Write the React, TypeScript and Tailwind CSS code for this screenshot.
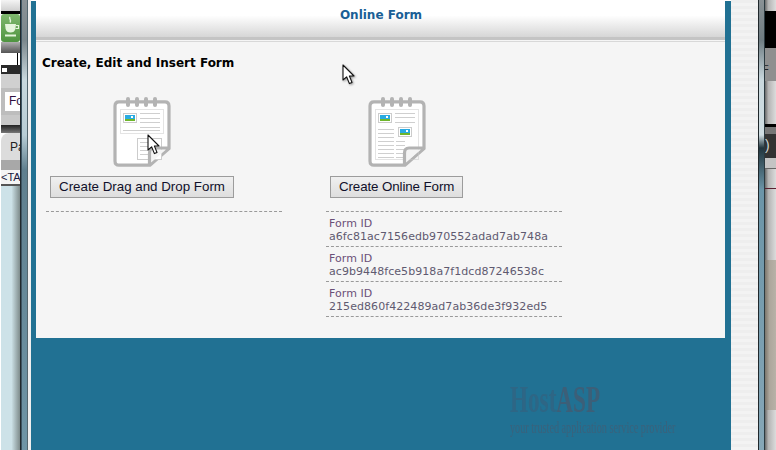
const sans = { fontFamily: '"DejaVu Sans", sans-serif' };

function Picture({ x, y, w = 14, h = 10 }: { x: number; y: number; w?: number; h?: number }) {
  return (
    <g>
      <rect x={x + 0.5} y={y + 0.5} width={w - 1} height={h - 1} fill="#fff" stroke="#cccccc" />
      <rect x={x + 2} y={y + 2} width={w - 4} height={h - 4} fill="#29abe2" />
      <rect x={x + 2} y={y + h - 4} width={w - 4} height="2" fill="#6fb62c" />
      <rect x={x + w - 6} y={y + 3} width="2" height="2" fill="#fff" />
    </g>
  );
}

function Notebook({ online }: { online?: boolean }) {
  const line = '#cfcfcf';
  return (
    <svg width="58" height="70" viewBox="0 0 58 70" className="block">
      <path d="M6 4.8 H52 Q56 4.8 56 9 V51.5 L37 68.2 H6 Q2 68.2 2 64 V9 Q2 4.8 6 4.8 Z" fill="#fff" stroke="#b3b3b3" strokeWidth="3.2" />
      {[15, 24, 33, 42].map((x) => (
        <rect key={x} x={x - 2} y="0" width="4" height="10" rx="2" fill="#b3b3b3" />
      ))}
      {online ? (
        <g>
          <rect x="7.5" y="12.5" width="43" height="50" fill="none" stroke="#c8c8c8" strokeDasharray="1 1" />
          <Picture x={10} y={16} />
          <Picture x={30} y={30} />
          {[16, 20, 25].map((y) => (
            <line key={y} x1="27" x2="47" y1={y + 0.5} y2={y + 0.5} stroke={line} />
          ))}
          {[32, 36, 40, 44, 48, 52, 56, 60].map((y) => (
            <line key={y} x1="10" x2="26" y1={y + 0.5} y2={y + 0.5} stroke={line} />
          ))}
          {[44, 48, 52, 56, 60].map((y) => (
            <line key={y} x1="28" x2="37" y1={y + 0.5} y2={y + 0.5} stroke={line} />
          ))}
        </g>
      ) : (
        <g>
          <rect x="7.5" y="12.5" width="43" height="24" fill="none" stroke="#c8c8c8" strokeDasharray="1 1" />
          <Picture x={10} y={16} />
          {[16, 21, 25, 30].map((y) => (
            <line key={y} x1="27" x2="47" y1={y + 0.5} y2={y + 0.5} stroke={line} />
          ))}
          <line x1="10" x2="47" y1="33.5" y2="33.5" stroke={line} />
          <rect x="24.5" y="41.5" width="24" height="21" fill="#fff" stroke="#cccccc" />
          {[45, 49, 53, 57].map((y) => (
            <line key={y} x1="27" x2="35" y1={y + 0.5} y2={y + 0.5} stroke={line} />
          ))}
        </g>
      )}
      <path d="M53 52.6 H41 Q38 52.6 38 56 V65.5 Z" fill="#f4f4f4" />
      <path d="M57 51 H41 Q36.5 51 36.5 56 V68" fill="none" stroke="#b3b3b3" strokeWidth="3.2" />
    </svg>
  );
}

function Cursor({ className }: { className: string }) {
  return (
    <svg width="14" height="22" viewBox="0 0 14 22" className={className}>
      <path d="M1 1 L1 16 L4.6 12.8 L7.4 19.6 L10 18.4 L7.4 12 L12 12 Z" fill="#fff" stroke="#111" strokeWidth="1.1" strokeLinejoin="round" />
    </svg>
  );
}

function FormEntry({ id }: { id: string }) {
  return (
    <div className="h-[35px] border-b border-dashed border-[#9a9a9a] pl-[3px] pt-[5px] text-[11px] leading-[13px] tracking-[0.06px] text-[#5f5a70]" style={sans}>
      <div className="text-[#6b4f78]">Form ID</div>
      <div>{id}</div>
    </div>
  );
}

function ActionColumn({ label, online, children }: { label: string; online?: boolean; children?: React.ReactNode }) {
  return (
    <div className="w-[236px]">
      <div className="pl-[4px]">
        <div className="inline-flex flex-col items-center">
          <Notebook online={online} />
          <button
            className={`mt-[9px] h-[22px] border border-[#9c9c9c] bg-gradient-to-b from-[#f0f0f0] to-[#dedede] px-[8px] text-[13.33px] leading-none text-[#10102a] ${online ? 'tracking-[-0.1px]' : ''}`}
            style={{ fontFamily: '"Liberation Sans", sans-serif' }}
          >
            {label}
          </button>
        </div>
      </div>
      <div className="mt-[13px] border-b border-dashed border-[#9a9a9a]" />
      {children}
    </div>
  );
}

function StripRow({ h, className, children }: { h: string; className: string; children?: React.ReactNode }) {
  return <div className={`${h} ${className} overflow-hidden whitespace-nowrap`}>{children}</div>;
}

function LeftStrip() {
  return (
    <div className="flex h-full w-[20px] flex-col overflow-hidden pl-px" style={{ fontFamily: '"Liberation Sans", sans-serif' }}>
      <StripRow h="h-[11px]" className="bg-gradient-to-b from-[#f4f4f4] to-[#cfcfcf]" />
      <StripRow h="h-[3px]" className="bg-black" />
      <StripRow h="h-[28px]" className="rounded-[3px] bg-gradient-to-b from-[#7fb86e] to-[#4f9440]">
        <svg width="19" height="28" viewBox="0 0 19 28" className="block">
          <path d="M4 10 H15 L14.4 15 Q13.4 18.5 9.5 18.5 Q5.6 18.5 4.6 15 Z" fill="#e4f4dc" />
          <path d="M15 11.5 H17.5 V14.5 H14.5" fill="none" stroke="#e4f4dc" strokeWidth="1.2" />
          <path d="M4 21.5 H15" stroke="#e4f4dc" strokeWidth="2" />
          <path d="M9 3 C7.5 5 11 6 9 8.5" fill="none" stroke="#e4f4dc" strokeWidth="1.4" />
        </svg>
      </StripRow>
      <StripRow h="h-[11px]" className="bg-gradient-to-b from-[#b0b0b0] to-[#555555]" />
      <StripRow h="h-[12px]" className="mr-[2px] border-r border-black bg-white" />
      <StripRow h="h-[9px]" className="bg-[#2a2a2a] pl-[1px] pt-[3px]">
        <div className="h-[4px] w-[5px] bg-white" />
      </StripRow>
      <StripRow h="h-[14px]" className="bg-[#d0d0d0]" />
      <StripRow h="h-[27px]" className="border-y-[4px] border-l-[4px] border-[#bdbdbd] bg-white pl-[4px] text-[12px] leading-[19px] text-[#301040]">Fo</StripRow>
      <StripRow h="h-[10px]" className="bg-[#c8c8c8]" />
      <StripRow h="h-[8px]" className="bg-gradient-to-b from-[#222222] to-[#777777]" />
      <StripRow h="h-[27px]" className="rounded-tl-[8px] bg-[#dcdcdc] pl-[9px] pt-[7px] text-[12px] leading-[14px] text-[#222222]">Pa</StripRow>
      <StripRow h="h-[10px]" className="bg-[#a8a8a8]" />
      <StripRow h="h-[16px]" className="border-b-2 border-[#555555] bg-[#f4f4f4] text-[11px] leading-[14px] text-[#1a1a40]">&lt;TA</StripRow>
      <div className="flex-1 bg-gradient-to-r from-[#cde2e8] from-55% to-[#7f8c8c]" />
    </div>
  );
}

function RightStrip() {
  const fade = 'bg-gradient-to-r from-[#6a6a6a] via-[#b4b4b4] via-30% to-[#dcdcdc]';
  return (
    <div className="flex h-full w-[11px] flex-col overflow-hidden bg-white text-[12px]" style={{ fontFamily: '"Liberation Sans", sans-serif' }}>
      <StripRow h="h-[11px]" className={fade} />
      <StripRow h="h-[37px]" className="bg-black" />
      <StripRow h="h-[33px]" className="bg-[#8f8f8f] pl-0 pt-[15px] text-[11px] leading-[12px] text-[#222222]">
        <span className="-ml-[3px] inline-block">F</span>
      </StripRow>
      <StripRow h="h-[43px]" className={fade} />
      <StripRow h="h-[3px]" className="bg-black" />
      <StripRow h="h-[7px]" className="bg-[#777777]" />
      <StripRow h="h-[24px]" className="bg-[#333333] pt-[3px] text-[14px] leading-[16px] text-[#cdd5d5]">)</StripRow>
      <StripRow h="h-[10px]" className="bg-[#c4c4c4]" />
      <StripRow h="h-[20px]" className={`${fade} border-t border-[#666666]`} />
      <div className="h-px bg-[#5a2030]" />
      <div className={`h-[71px] ${fade}`} />
      <div className="h-[150px] bg-gradient-to-r from-[#7c766c] via-[#aca69c] via-40% to-[#b8b2a8]" />
      <div className={`flex-1 ${fade}`} />
    </div>
  );
}

export default function App() {
  return (
    <div className="relative flex h-[450px] w-[776px] overflow-hidden bg-white">
      <LeftStrip />
      <div className="w-px bg-[#20282c]" />
      <div className="w-px bg-[#3e5563]" />
      <div className="w-[5px] bg-[linear-gradient(180deg,#8a9296_0,#7b878c_40px,#c9d8dd_80px,#b8cdd5_135px,#5f7f8e_170px,#6f95a6_100%)]" />
      <div className="w-px bg-[#53666e]" />
      <div className="w-[3px] bg-[#efefef]" />

      <div className="mt-px flex w-[700px] flex-col bg-[#217193] pl-[5px]">
        <div className="h-[337px] w-[689px] bg-[#f5f5f5]">
          <div className="h-[36px] bg-gradient-to-b from-white from-40% to-[#d6d6d6] pt-[7px] text-center text-[12px] font-bold leading-[15px] text-[#1a5f96]" style={sans}>
            <span className="ml-[1px]">Online Form</span>
          </div>
          <div className="h-[3px] bg-[#c4c4c4]" />
          <div className="mt-px h-px bg-[#d8d8d8]" />
          <div className="px-[6px] pt-[14px] text-[12px] font-bold leading-[15px] text-black" style={sans}>
            Create, Edit and Insert Form
          </div>
          <div className="ml-[10px] mt-[26px] flex gap-[44px]">
            <ActionColumn label="Create Drag and Drop Form" />
            <ActionColumn label="Create Online Form" online>
              <FormEntry id="a6fc81ac7156edb970552adad7ab748a" />
              <FormEntry id="ac9b9448fce5b918a7f1dcd87246538c" />
              <FormEntry id="215ed860f422489ad7ab36de3f932ed5" />
            </ActionColumn>
          </div>
        </div>
      </div>

      <div className="w-[27px] bg-[repeating-linear-gradient(180deg,#eeeeee_0,#eeeeee_3px,#f3f3f3_3px,#f3f3f3_6px)]" />
      <div className="w-px bg-[#20282c]" />
      <div className="w-[5px] bg-[linear-gradient(180deg,#8a9296_0,#6e7c82_40px,#c9d8dd_80px,#cfdde2_135px,#22363e_148px,#6b95a8_190px,#86a7b7_100%)]" />
      <div className="w-px bg-[#2b3a40]" />
      <RightStrip />

      {/* watermark */}
      <div className="absolute left-[510px] top-[379px] origin-left scale-x-[0.61] whitespace-nowrap text-[38px] font-bold leading-[40px] text-[#2e6685]" style={{ fontFamily: '"Liberation Serif", serif' }}>
        Host<span className="text-[#3c5f78]">ASP</span>
      </div>
      <div className="absolute left-[510px] top-[420px] origin-left scale-x-[0.6] whitespace-nowrap text-[17px] leading-[16px] text-[#3a627c]" style={{ fontFamily: '"Liberation Serif", serif' }}>
        your trusted application service provider
      </div>

      <Cursor className="absolute left-[147px] top-[134px]" />
      <Cursor className="absolute left-[342px] top-[64px] drop-shadow-[1px_1px_1px_rgba(0,0,0,0.4)]" />
    </div>
  );
}
